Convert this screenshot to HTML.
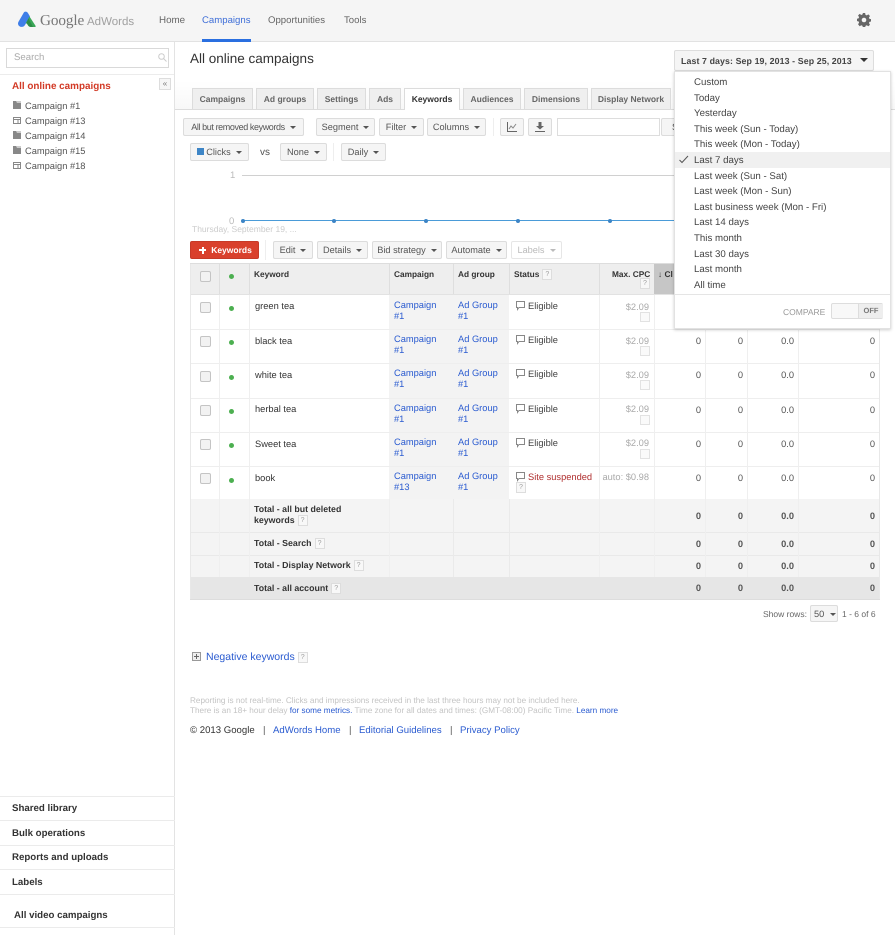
<!DOCTYPE html>
<html><head><meta charset="utf-8"><style>
html,body{margin:0;padding:0;background:#fff}
#p{position:relative;width:895px;height:935px;overflow:hidden;font-family:"Liberation Sans",Arial,sans-serif;font-size:10px;color:#333;background:#fff;text-rendering:geometricPrecision;filter:blur(.3px)}
#p div,#p span.a,#p svg{position:absolute}
.t{white-space:nowrap;line-height:12px;margin-top:1px}
.b{font-weight:bold}
.l{color:#2a5bd0}
.btn{background:#f5f5f5;border:1px solid #dcdcdc;border-radius:2px;box-sizing:border-box;height:18px;line-height:16px;text-align:center;color:#555;font-size:9.2px;white-space:nowrap}
.btn i,.ar{display:inline-block;width:0;height:0;border-left:3px solid transparent;border-right:3px solid transparent;border-top:3px solid #555;margin-left:5px;vertical-align:1px}
.tab{background:#efefef;border:1px solid #dcdcdc;border-bottom:0;box-sizing:border-box;height:21px;top:88px;line-height:21px;text-align:center;font-weight:bold;font-size:8.5px;color:#666;white-space:nowrap}
.side{left:12px;font-size:9.3px;color:#555;white-space:nowrap;line-height:12px;margin-top:1px}
.sl{left:0;width:175px;height:1px;background:#ebebeb}
.sb{left:12px;font-weight:bold;font-size:9.7px;color:#333;white-space:nowrap;line-height:12px;margin-top:2px}
.m{left:694px;font-size:9.7px;color:#444;white-space:nowrap;line-height:12px;margin-top:2px}
.q{display:inline-block;width:8px;height:9px;border:1px solid #ddd;background:#f8f8f8;color:#999;font-size:7px;line-height:9px;text-align:center;font-weight:normal;vertical-align:1px;margin-left:3px}
.h{height:1px;left:190px;width:690px;background:#eee}
.v{width:1px;background:#efefef}
.vh{width:1px;background:#dedede;top:264px;height:30px}
.cb{left:200px;width:9px;height:9px;border:1px solid #c4c4c4;border-radius:2px;background:#f2f2f2}
.dot{width:5px;height:5px;border-radius:50%;background:#4caf50;left:229px}
.n{text-align:right;white-space:nowrap;line-height:12px;font-size:9.3px;color:#555;margin-top:1px}
.tn{font-weight:bold}
.cp{left:394px;color:#2a5bd0;line-height:11px;font-size:9.3px}
.ag{left:458px;color:#2a5bd0;line-height:11px;font-size:9.3px}
.st{left:528px;color:#444;font-size:9.3px;line-height:12px}
.pr{left:600px;width:49px;text-align:right;color:#aaa;font-size:9.3px;line-height:12px}
.ck{left:640px;width:8px;height:8px;border:1px solid #e2e2e2;background:#fafafa}
.bub{left:516px}
.hd{font-size:8.3px}
.tt{font-size:8.8px}
.kw{left:255px;font-size:9.3px}
.f{font-size:9.6px}
</style></head><body><div id="p">

<div style="left:0;top:0;width:895px;height:41px;background:#f5f5f5;border-bottom:1px solid #e2e2e2"></div>
<svg style="left:17px;top:10px" width="20" height="20" viewBox="0 0 20 20"><path d="M7 2.2c1.4-1 3.2-.5 4 .9l2 3.4-5 8.5c-.7 1.100-1.600 1.900-3.200 1.900C2.600 17 1 15.300 1 13.500c0-.6.2-1.200.5-1.700z" fill="#3f7ee8"/><path d="M12.500 6.500l6 9.200c.6 1.100-.2 1.300-1.300 1.300h-2.500c-2.300 0-3-1.100-3.700-2.200L8.800 13z" fill="#3aa757"/><path d="M11.500 8.500l4.500 8.500h-1.800c-2 0-3-1-3.600-2.300L9.500 12.500z" fill="#2e8b47"/></svg>
<div class="t" style="left:40px;top:10px;font-family:'Liberation Serif',serif;font-size:15.2px;line-height:20px;color:#777;letter-spacing:-.1px">Google</div>
<div class="t" style="left:87px;top:13px;font-size:11.5px;line-height:16px;color:#a0a0a0">AdWords</div>
<div class="t" style="left:159px;top:14px;font-size:9.8px;color:#666">Home</div>
<div class="t" style="left:202px;top:14px;font-size:9.6px;color:#3f6fd8">Campaigns</div>
<div style="left:202px;top:39px;width:49px;height:3px;background:#2a6fe0"></div>
<div class="t" style="left:268px;top:14px;font-size:9.6px;color:#666">Opportunities</div>
<div class="t" style="left:344px;top:14px;font-size:9.6px;color:#666">Tools</div>
<svg style="left:857px;top:13px" width="14" height="14" viewBox="0 0 14 14"><path d="M5.800 0h2.400l.4 2 1.300.6 1.800-1.100 1.700 1.700-1.100 1.800.6 1.300 2 .4v2.400l-2 .4-.6 1.300 1.100 1.800-1.700 1.700-1.800-1.100-1.300.6-.4 2H5.800l-.4-2-1.300-.6-1.800 1.100L.6 12.100l1.100-1.800-.6-1.300-2-.4V6.200l2-.4.6-1.300L.6 2.700l1.700-1.700 1.800 1.100 1.300-.6z" fill="#666" transform="translate(.5 0) scale(.93)"/><circle cx="7" cy="7" r="2.300" fill="#f5f5f5"/></svg>

<!-- sidebar -->
<div style="left:174px;top:42px;width:1px;height:893px;background:#e3e3e3"></div>
<div style="left:6px;top:48px;width:161px;height:18px;border:1px solid #d9d9d9;background:#fff"></div>
<div class="t" style="left:14px;top:51px;font-size:9.6px;color:#aaa">Search</div>
<svg style="left:158px;top:53px" width="9" height="9" viewBox="0 0 9 9"><circle cx="3.500" cy="3.500" r="2.800" fill="none" stroke="#ccc"/><path d="M5.500 5.500L8.500 8.500" stroke="#ccc"/></svg>
<div style="left:0;top:74px;width:174px;height:1px;background:#ececec"></div>
<div class="t b" style="left:12px;top:80px;font-size:9.9px;color:#d23a26">All online campaigns</div>
<div style="left:159px;top:78px;width:10px;height:10px;border:1px solid #ddd;background:#f6f6f6;color:#777;font-size:8px;line-height:9px;text-align:center">«</div>
<svg style="left:13px;top:101px" width="8" height="8"><path d="M0 0h8v8H0z" fill="#888"/><path d="M4 2h4v-2H3z" fill="#ccc"/></svg>
<div class="side" style="left:25px;top:99px">Campaign #1</div>
<svg style="left:13px;top:116px" width="8" height="8"><path d="M.5 1.500h7v6h-7zM.5 3.500h7M5 3.500v4" fill="none" stroke="#888"/></svg>
<div class="side" style="left:25px;top:114px">Campaign #13</div>
<svg style="left:13px;top:131px" width="8" height="8"><path d="M0 0h8v8H0z" fill="#888"/><path d="M4 2h4v-2H3z" fill="#ccc"/></svg>
<div class="side" style="left:25px;top:129px">Campaign #14</div>
<svg style="left:13px;top:146px" width="8" height="8"><path d="M0 0h8v8H0z" fill="#888"/><path d="M4 2h4v-2H3z" fill="#ccc"/></svg>
<div class="side" style="left:25px;top:144px">Campaign #15</div>
<svg style="left:13px;top:161px" width="8" height="8"><path d="M.5 1.500h7v6h-7zM.5 3.500h7M5 3.500v4" fill="none" stroke="#888"/></svg>
<div class="side" style="left:25px;top:159px">Campaign #18</div>
<div class="sl" style="top:796px"></div>
<div class="sb" style="top:801px">Shared library</div>
<div class="sl" style="top:820px"></div>
<div class="sb" style="top:826px">Bulk operations</div>
<div class="sl" style="top:845px"></div>
<div class="sb" style="top:850px">Reports and uploads</div>
<div class="sl" style="top:869px"></div>
<div class="sb" style="top:875px">Labels</div>
<div class="sl" style="top:894px"></div>
<div class="sb" style="left:14px;top:908px">All video campaigns</div>
<div class="sl" style="top:927px"></div>

<!-- title -->
<div class="t" style="left:190px;top:50px;font-size:13.5px;line-height:16px;color:#333">All online campaigns</div>

<!-- tabs -->
<div style="left:175px;top:80px;width:720px;height:29px;background:linear-gradient(#fff,#f8f8f8)"></div>
<div style="left:175px;top:109px;width:720px;height:1px;background:#dcdcdc"></div>
<div class="tab" style="left:192px;width:61px">Campaigns</div>
<div class="tab" style="left:256px;width:58px">Ad groups</div>
<div class="tab" style="left:317px;width:49px">Settings</div>
<div class="tab" style="left:369px;width:32px">Ads</div>
<div class="tab" style="left:404px;width:56px;height:22px;background:#fff;color:#333;z-index:1">Keywords</div>
<div class="tab" style="left:463px;width:58px">Audiences</div>
<div class="tab" style="left:524px;width:64px">Dimensions</div>
<div class="tab" style="left:591px;width:80px">Display Network</div>

<!-- toolbar -->
<div class="btn" style="left:183px;top:118px;width:121px;font-size:9px;letter-spacing:-.4px">All but removed keywords<i></i></div>
<div class="btn" style="left:316px;top:118px;width:59px">Segment<i></i></div>
<div class="btn" style="left:379px;top:118px;width:45px">Filter<i></i></div>
<div class="btn" style="left:427px;top:118px;width:59px">Columns<i></i></div>
<div style="left:493px;top:118px;width:1px;height:18px;background:#eee"></div>
<div class="btn" style="left:500px;top:118px;width:24px"></div>
<svg style="left:507px;top:122px" width="10" height="10"><path d="M.5 0v9.500H10" fill="none" stroke="#666"/><path d="M2 7l2-3 2 2 3-4" fill="none" stroke="#888"/></svg>
<div class="btn" style="left:528px;top:118px;width:24px"></div>
<svg style="left:535px;top:122px" width="10" height="10"><path d="M3.500 0h3v4H9L5 7.500 1 4h2.500zM0 9h10v1H0z" fill="#666"/></svg>
<div style="left:557px;top:118px;width:101px;height:16px;border:1px solid #ddd;background:#fff"></div>
<div class="btn" style="left:661px;top:118px;width:20px;text-align:left;padding-left:10px">S</div>

<div class="btn" style="left:190px;top:143px;width:59px"><span style="display:inline-block;width:7px;height:7px;background:#3d85c6;margin-right:2px"></span>Clicks<i></i></div>
<div class="t" style="left:260px;top:146px;font-size:10px;color:#555">vs</div>
<div class="btn" style="left:280px;top:143px;width:47px">None<i></i></div>
<div style="left:333px;top:143px;width:1px;height:18px;background:#eee"></div>
<div class="btn" style="left:341px;top:143px;width:45px">Daily<i></i></div>

<!-- chart -->
<div class="t" style="left:230px;top:169px;font-size:9.5px;color:#bbb">1</div>
<div style="left:242px;top:175px;width:440px;height:1px;background:#d0d0d0"></div>
<div class="t" style="left:229px;top:215px;font-size:9.5px;color:#bbb">0</div>
<div style="left:242px;top:220px;width:440px;height:1px;background:#4a9bd8"></div>
<div style="left:241px;top:219px;width:4px;height:4px;border-radius:50%;background:#3d85c6"></div>
<div style="left:332px;top:219px;width:4px;height:4px;border-radius:50%;background:#3d85c6"></div>
<div style="left:424px;top:219px;width:4px;height:4px;border-radius:50%;background:#3d85c6"></div>
<div style="left:516px;top:219px;width:4px;height:4px;border-radius:50%;background:#3d85c6"></div>
<div style="left:608px;top:219px;width:4px;height:4px;border-radius:50%;background:#3d85c6"></div>
<div class="t" style="left:192px;top:222px;font-size:8.5px;color:#ccc">Thursday, September 19, ...</div>

<!-- action row -->
<div class="btn b" style="left:190px;top:241px;width:69px;height:18px;background:#d9402c;border-color:#c63a28;color:#fff;font-size:8.5px;padding-left:14px">Keywords</div>
<div style="left:199px;top:249px;width:7px;height:2px;background:#fff"></div>
<div style="left:201.5px;top:246.500px;width:2px;height:7px;background:#fff"></div>
<div style="left:265px;top:240px;width:1px;height:20px;background:#eee"></div>
<div class="btn" style="left:273px;top:241px;width:40px">Edit<i></i></div>
<div class="btn" style="left:317px;top:241px;width:51px">Details<i></i></div>
<div class="btn" style="left:372px;top:241px;width:70px">Bid strategy<i></i></div>
<div class="btn" style="left:446px;top:241px;width:61px">Automate<i></i></div>
<div class="btn" style="left:511px;top:241px;width:51px;background:#fff;border-color:#e6e6e6;color:#bbb">Labels<i style="border-top-color:#bbb"></i></div>

<!-- table -->
<div style="left:190px;top:263px;width:690px;height:31px;background:#eeeeee;border-top:1px solid #ddd"></div>
<div style="left:654px;top:264px;width:21px;height:31px;background:#c6c6c6"></div>
<div style="left:389px;top:295px;width:120px;height:204px;background:#f3f3f3"></div>
<div style="left:190px;top:499px;width:690px;height:78px;background:#f4f4f4"></div>
<div style="left:190px;top:577px;width:690px;height:22px;background:#e6e6e6"></div>
<div class="h" style="top:294px;background:#e2e2e2"></div>
<div class="h" style="top:329px"></div><div class="h" style="top:363px"></div><div class="h" style="top:398px"></div><div class="h" style="top:432px"></div><div class="h" style="top:466px"></div>
<div class="h" style="top:532px;background:#e9e9e9"></div><div class="h" style="top:555px;background:#e9e9e9"></div><div class="h" style="top:599px;background:#ddd"></div>
<div class="v" style="left:190px;top:264px;height:335px;background:#e8e8e8"></div>
<div class="v" style="left:219px;top:295px;height:282px"></div>
<div class="v" style="left:249px;top:295px;height:282px"></div>
<div class="v" style="left:389px;top:499px;height:78px"></div>
<div class="v" style="left:453px;top:499px;height:78px;background:#eaeaea"></div>
<div class="v" style="left:509px;top:499px;height:78px;background:#eaeaea"></div>
<div class="v" style="left:599px;top:295px;height:282px"></div>
<div class="v" style="left:654px;top:295px;height:282px"></div>
<div class="v" style="left:705px;top:295px;height:282px"></div>
<div class="v" style="left:747px;top:295px;height:282px"></div>
<div class="v" style="left:798px;top:295px;height:282px"></div>
<div class="v" style="left:879px;top:264px;height:335px;background:#e8e8e8"></div>
<div class="vh" style="left:219px"></div><div class="vh" style="left:249px"></div><div class="vh" style="left:389px"></div><div class="vh" style="left:453px"></div><div class="vh" style="left:509px"></div><div class="vh" style="left:599px"></div>

<div class="cb" style="top:271px"></div><div class="dot" style="top:274px"></div>
<div class="t b hd" style="left:254px;top:267px">Keyword</div>
<div class="t b hd" style="left:394px;top:267px">Campaign</div>
<div class="t b hd" style="left:458px;top:267px">Ad group</div>
<div class="t b hd" style="left:514px;top:267px">Status<span class="q">?</span></div>
<div class="t b hd" style="left:612px;top:267px">Max. CPC</div>
<div class="q" style="left:640px;top:278px;margin:0">?</div>
<div class="t b hd" style="left:658px;top:267px">↓ Cl</div>

<div class="cb" style="top:302px"></div><div class="dot" style="top:306px"></div>
<div class="t kw" style="top:299px">green tea</div>
<div class="t cp" style="top:299px">Campaign<br>#1</div><div class="t ag" style="top:299px">Ad Group<br>#1</div>
<svg class="bub" style="top:301px" width="10" height="10"><path d="M.5.5h8v6H3L1.500 8.500v-2h-1z" fill="#fff" stroke="#888"/></svg><div class="t st" style="top:299px">Eligible</div>
<div class="pr t" style="top:300px">$2.09</div><div class="ck" style="top:312px"></div>

<div class="cb" style="top:336px"></div><div class="dot" style="top:340px"></div>
<div class="t kw" style="top:334px">black tea</div>
<div class="t cp" style="top:333px">Campaign<br>#1</div><div class="t ag" style="top:333px">Ad Group<br>#1</div>
<svg class="bub" style="top:335px" width="10" height="10"><path d="M.5.5h8v6H3L1.500 8.500v-2h-1z" fill="#fff" stroke="#888"/></svg><div class="t st" style="top:333px">Eligible</div>
<div class="pr t" style="top:334px">$2.09</div><div class="ck" style="top:346px"></div>

<div class="cb" style="top:371px"></div><div class="dot" style="top:375px"></div>
<div class="t kw" style="top:368px">white tea</div>
<div class="t cp" style="top:367px">Campaign<br>#1</div><div class="t ag" style="top:367px">Ad Group<br>#1</div>
<svg class="bub" style="top:369px" width="10" height="10"><path d="M.5.5h8v6H3L1.500 8.500v-2h-1z" fill="#fff" stroke="#888"/></svg><div class="t st" style="top:367px">Eligible</div>
<div class="pr t" style="top:368px">$2.09</div><div class="ck" style="top:380px"></div>

<div class="cb" style="top:405px"></div><div class="dot" style="top:409px"></div>
<div class="t kw" style="top:402px">herbal tea</div>
<div class="t cp" style="top:402px">Campaign<br>#1</div><div class="t ag" style="top:402px">Ad Group<br>#1</div>
<svg class="bub" style="top:404px" width="10" height="10"><path d="M.5.5h8v6H3L1.500 8.500v-2h-1z" fill="#fff" stroke="#888"/></svg><div class="t st" style="top:402px">Eligible</div>
<div class="pr t" style="top:402px">$2.09</div><div class="ck" style="top:415px"></div>

<div class="cb" style="top:439px"></div><div class="dot" style="top:443px"></div>
<div class="t kw" style="top:437px">Sweet tea</div>
<div class="t cp" style="top:436px">Campaign<br>#1</div><div class="t ag" style="top:436px">Ad Group<br>#1</div>
<svg class="bub" style="top:438px" width="10" height="10"><path d="M.5.5h8v6H3L1.500 8.500v-2h-1z" fill="#fff" stroke="#888"/></svg><div class="t st" style="top:436px">Eligible</div>
<div class="pr t" style="top:436px">$2.09</div><div class="ck" style="top:449px"></div>

<div class="cb" style="top:473px"></div><div class="dot" style="top:478px"></div>
<div class="t kw" style="top:471px">book</div>
<div class="t cp" style="top:470px">Campaign<br>#13</div><div class="t ag" style="top:470px">Ad Group<br>#1</div>
<svg class="bub" style="top:472px" width="10" height="10"><path d="M.5.5h8v6H3L1.500 8.500v-2h-1z" fill="#fff" stroke="#888"/></svg><div class="t st" style="top:470px;color:#b03030">Site suspended</div>
<div class="q" style="left:516px;top:482px;margin:0">?</div>
<div class="pr t" style="top:470px">auto: $0.98</div>

<div class="t b tt" style="left:254px;top:503px;line-height:10.5px">Total - all but deleted<br>keywords<span class="q">?</span></div>
<div class="t b tt" style="left:254px;top:536px">Total - Search<span class="q">?</span></div>
<div class="t b tt" style="left:254px;top:558px">Total - Display Network<span class="q">?</span></div>
<div class="t b tt" style="left:254px;top:581px">Total - all account<span class="q">?</span></div>

<div class="n" style="left:660px;width:41px;top:334px">0</div><div class="n" style="left:710px;width:33px;top:334px">0</div><div class="n" style="left:752px;width:42px;top:334px">0.0</div><div class="n" style="left:810px;width:65px;top:334px">0</div>
<div class="n" style="left:660px;width:41px;top:368px">0</div><div class="n" style="left:710px;width:33px;top:368px">0</div><div class="n" style="left:752px;width:42px;top:368px">0.0</div><div class="n" style="left:810px;width:65px;top:368px">0</div>
<div class="n" style="left:660px;width:41px;top:403px">0</div><div class="n" style="left:710px;width:33px;top:403px">0</div><div class="n" style="left:752px;width:42px;top:403px">0.0</div><div class="n" style="left:810px;width:65px;top:403px">0</div>
<div class="n" style="left:660px;width:41px;top:437px">0</div><div class="n" style="left:710px;width:33px;top:437px">0</div><div class="n" style="left:752px;width:42px;top:437px">0.0</div><div class="n" style="left:810px;width:65px;top:437px">0</div>
<div class="n" style="left:660px;width:41px;top:471px">0</div><div class="n" style="left:710px;width:33px;top:471px">0</div><div class="n" style="left:752px;width:42px;top:471px">0.0</div><div class="n" style="left:810px;width:65px;top:471px">0</div>
<div class="n tn" style="left:660px;width:41px;top:509px">0</div><div class="n tn" style="left:710px;width:33px;top:509px">0</div><div class="n tn" style="left:752px;width:42px;top:509px">0.0</div><div class="n tn" style="left:810px;width:65px;top:509px">0</div>
<div class="n tn" style="left:660px;width:41px;top:537px">0</div><div class="n tn" style="left:710px;width:33px;top:537px">0</div><div class="n tn" style="left:752px;width:42px;top:537px">0.0</div><div class="n tn" style="left:810px;width:65px;top:537px">0</div>
<div class="n tn" style="left:660px;width:41px;top:559px">0</div><div class="n tn" style="left:710px;width:33px;top:559px">0</div><div class="n tn" style="left:752px;width:42px;top:559px">0.0</div><div class="n tn" style="left:810px;width:65px;top:559px">0</div>
<div class="n tn" style="left:660px;width:41px;top:581px">0</div><div class="n tn" style="left:710px;width:33px;top:581px">0</div><div class="n tn" style="left:752px;width:42px;top:581px">0.0</div><div class="n tn" style="left:810px;width:65px;top:581px">0</div>

<div class="t" style="left:763px;top:607px;font-size:8.5px;color:#666">Show rows:</div>
<div class="btn" style="left:810px;top:605px;width:28px;height:17px;text-align:left;padding-left:3px">50<i style="margin-left:6px"></i></div>
<div class="t" style="left:842px;top:607px;font-size:8.5px;color:#666">1 - 6 of 6</div>

<!-- bottom -->
<div style="left:192px;top:652px;width:7px;height:7px;border:1px solid #999;background:#eee"></div>
<div style="left:194px;top:656px;width:5px;height:1px;background:#666"></div>
<div style="left:196px;top:654px;width:1px;height:5px;background:#666"></div>
<div class="t" style="left:206px;top:650px;font-size:10.5px;color:#2a5bd0">Negative keywords<span class="q">?</span></div>
<div class="t" style="left:190px;top:695px;font-size:8.18px;line-height:9.5px;color:#c4c4c4">Reporting is not real-time. Clicks and impressions received in the last three hours may not be included here.<br>There is an 18+ hour delay <span style="color:#2a5bd0">for some metrics.</span> Time zone for all dates and times: (GMT-08:00) Pacific Time. <span style="color:#2a5bd0">Learn more</span></div>
<div class="t f" style="left:190px;top:724px;color:#333">© 2013 Google</div>
<div class="t f" style="left:263px;top:724px;color:#555">|</div>
<div class="t f" style="left:273px;top:724px;color:#2a5bd0">AdWords Home</div>
<div class="t f" style="left:349px;top:724px;color:#555">|</div>
<div class="t f" style="left:359px;top:724px;color:#2a5bd0">Editorial Guidelines</div>
<div class="t f" style="left:450px;top:724px;color:#555">|</div>
<div class="t f" style="left:460px;top:724px;color:#2a5bd0">Privacy Policy</div>

<!-- date dropdown -->
<div style="left:674px;top:50px;width:200px;height:21px;box-sizing:border-box;background:#f5f5f5;border:1px solid #ddd;border-radius:2px"></div>
<div class="t b" style="left:681px;top:54px;font-size:8.8px;color:#444;letter-spacing:.1px">Last 7 days: Sep 19, 2013 - Sep 25, 2013</div>
<div style="left:860px;top:58px;width:0;height:0;border-left:4px solid transparent;border-right:4px solid transparent;border-top:4px solid #333"></div>
<div style="left:674px;top:71px;width:217px;height:258px;background:#fff;border:1px solid #e2e2e2;box-sizing:border-box;box-shadow:0 1px 3px rgba(0,0,0,.2)"></div>
<div style="left:675px;top:152px;width:215px;height:16px;background:#f0f0f0"></div>
<svg style="left:679px;top:155px" width="10" height="9"><path d="M.5 5l2.500 2.500L9 1" fill="none" stroke="#555"/></svg>
<div class="t m" style="top:75px">Custom</div>
<div class="t m" style="top:91px">Today</div>
<div class="t m" style="top:106px">Yesterday</div>
<div class="t m" style="top:122px">This week (Sun - Today)</div>
<div class="t m" style="top:137px">This week (Mon - Today)</div>
<div class="t m" style="top:153px">Last 7 days</div>
<div class="t m" style="top:169px">Last week (Sun - Sat)</div>
<div class="t m" style="top:184px">Last week (Mon - Sun)</div>
<div class="t m" style="top:200px">Last business week (Mon - Fri)</div>
<div class="t m" style="top:215px">Last 14 days</div>
<div class="t m" style="top:231px">This month</div>
<div class="t m" style="top:247px">Last 30 days</div>
<div class="t m" style="top:262px">Last month</div>
<div class="t m" style="top:278px">All time</div>
<div style="left:675px;top:294px;width:215px;height:1px;background:#e5e5e5"></div>
<div class="t" style="left:783px;top:305px;font-size:8.5px;color:#999">COMPARE</div>
<div style="left:831px;top:303px;width:52px;height:16px;box-sizing:border-box;border:1px solid #ddd;border-radius:2px;background:#f8f8f8"></div>
<div class="b" style="left:858px;top:304px;width:24px;height:14px;background:#eee;border-left:1px solid #ddd;font-size:7.5px;line-height:14px;text-align:center;color:#777">OFF</div>
</div></body></html>
